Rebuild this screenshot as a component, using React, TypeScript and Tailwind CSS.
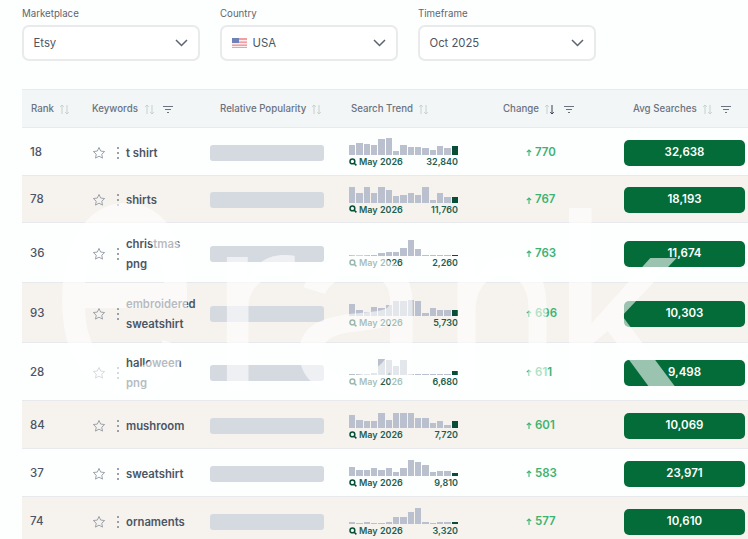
type Row = {
  rank: number
  keyword: string
  bars: number[]
  total: string
  change: number
  avg: string
  height: string
}

const rows: Row[] = [
  { rank: 18, keyword: "t shirt", bars: [10, 12, 11, 10, 16, 17, 4, 10, 8, 8, 7, 5, 9, 7, 9], total: "32,840", change: 770, avg: "32,638", height: "h-[48px]" },
  { rank: 78, keyword: "shirts", bars: [16, 10, 16, 10, 16, 13, 7, 8, 10, 8, 16, 3, 10, 6, 6], total: "11,760", change: 767, avg: "18,193", height: "h-[47px]" },
  { rank: 36, keyword: "christmas png", bars: [1, 1, 1, 1, 3, 4, 4, 8, 16, 7, 1, 1, 1, 1, 1], total: "2,260", change: 763, avg: "11,674", height: "h-[60px]" },
  { rank: 93, keyword: "embroidered sweatshirt", bars: [12, 6, 4, 9, 8, 11, 15, 15, 16, 15, 3, 8, 6, 6, 6], total: "5,730", change: 696, avg: "10,303", height: "h-[60px]" },
  { rank: 28, keyword: "halloween png", bars: [1, 1, 1, 2, 16, 15, 9, 15, 1, 1, 1, 1, 1, 1, 4], total: "6,680", change: 611, avg: "9,498", height: "h-[58px]" },
  { rank: 84, keyword: "mushroom", bars: [13, 8, 7, 7, 15, 8, 15, 15, 15, 10, 10, 5, 7, 3, 7], total: "7,720", change: 601, avg: "10,069", height: "h-[48px]" },
  { rank: 37, keyword: "sweatshirt", bars: [9, 6, 6, 8, 6, 8, 4, 8, 16, 14, 11, 4, 5, 5, 3], total: "9,810", change: 583, avg: "23,971", height: "h-[48px]" },
  { rank: 74, keyword: "ornaments", bars: [2, 1, 2, 1, 1, 2, 7, 7, 12, 16, 2, 1, 2, 2, 2], total: "3,320", change: 577, avg: "10,610", height: "h-[48px]" },
]

function Chevron() {
  return (
    <svg width="13" height="8" viewBox="0 0 13 8" fill="none" stroke="#5b6470" strokeWidth="1.5">
      <path d="M1 1l5.5 5.5L12 1" />
    </svg>
  )
}

function Flag() {
  return (
    <svg width="15" height="10" viewBox="0 0 15 10">
      <rect width="15" height="10" fill="#f0a0a4" />
      <rect y="2" width="15" height="1.4" fill="#fbeeee" />
      <rect y="5" width="15" height="1.4" fill="#fbeeee" />
      <rect y="8" width="15" height="1" fill="#fbeeee" />
      <rect width="7" height="5" fill="#6f82b8" />
    </svg>
  )
}

function Select({ label, value, flag }: { label: string; value: string; flag?: boolean }) {
  return (
    <div className="w-[178px]">
      <div className="text-[9.7px] leading-[12px] text-[#5f6670]">{label}</div>
      <div className="mt-[5px] h-[36px] flex items-center justify-between pl-[9.5px] pr-[10px] bg-white border-2 border-[#e8eaec] rounded-[7px]">
        <div className="flex items-center gap-[6px] text-[11.3px] text-[#4b5563]">
          {flag && <Flag />}
          {value}
        </div>
        <Chevron />
      </div>
    </div>
  )
}

function SortIcon({ active }: { active?: boolean }) {
  return (
    <svg width="11" height="11" viewBox="0 0 11 11" fill="none" strokeWidth="1">
      <path d="M3 10V1M1.2 2.8L3 1l1.8 1.8" stroke="#c5d2cc" />
      <path d="M8 1v9M6.2 8.2L8 10l1.8-1.8" stroke={active ? "#374151" : "#c5d2cc"} />
    </svg>
  )
}

function FilterIcon() {
  return (
    <svg width="10" height="7" viewBox="0 0 10 7" fill="none" stroke="#6b7280" strokeWidth="1">
      <path d="M0 .5h10M2 3.5h6M4 6.5h2" />
    </svg>
  )
}

function Star() {
  return (
    <svg width="14" height="14" viewBox="0 0 24 24" fill="none" stroke="#9aa1ab" strokeWidth="1.7" strokeLinejoin="round">
      <path d="M12 2.5l2.9 6.2 6.8.8-5 4.6 1.3 6.7-6-3.4-6 3.4 1.3-6.7-5-4.6 6.8-.8z" />
    </svg>
  )
}

function Dots() {
  return (
    <div className="flex flex-col gap-[3px]">
      <span className="w-[2px] h-[2px] rounded-full bg-[#7b828c]" />
      <span className="w-[2px] h-[2px] rounded-full bg-[#7b828c]" />
      <span className="w-[2px] h-[2px] rounded-full bg-[#7b828c]" />
    </div>
  )
}

function Trend({ bars, total }: { bars: number[]; total: string }) {
  return (
    <div className="w-[109px]">
      <div className="h-[17px] flex items-end gap-[1px]">
        {bars.map((b, i) => (
          <div
            key={i}
            className={i === bars.length - 1 ? "flex-1 bg-[#064e36]" : "flex-1 bg-[#bac0cd]"}
            style={{ height: b }}
          />
        ))}
      </div>
      <div className="mt-[1px] flex items-center justify-between text-[9px] leading-[11px] font-semibold text-[#1f5f50]">
        <div className="flex items-center gap-[2px]">
          <svg width="8" height="8" viewBox="0 0 8 8" fill="none" stroke="#064e36" strokeWidth="1.5">
            <circle cx="3.4" cy="3.4" r="2.4" />
            <path d="M5.2 5.2L7.4 7.4" />
          </svg>
          May 2026
        </div>
        <span>{total}</span>
      </div>
    </div>
  )
}

function TableRow({ row, odd }: { row: Row; odd: boolean }) {
  return (
    <div className={`${row.height} pt-[2px] flex items-center border-b border-[#e8e9ec] ${odd ? "bg-[#f6f3ee]" : "bg-[#fdfefe]"}`}>
      <div className="w-[70px] pl-[8px] text-[11.5px] font-medium text-[#4b5563]">{row.rank}</div>
      <div className="w-[118px] flex items-center">
        <Star />
        <div className="ml-[11px] mr-[7px]">
          <Dots />
        </div>
        <div className="w-[73px] text-[11.3px] leading-[20px] font-semibold text-[#4b5563]">{row.keyword}</div>
      </div>
      <div className="w-[139px]">
        <div className="w-[114px] h-[16px] rounded-[3px] bg-[#d5d9e0]" />
      </div>
      <Trend bars={row.bars} total={row.total} />
      <div className="w-[166px] pl-[68px] flex items-center gap-[3px] text-[11.5px] font-semibold text-[#3cb371]">
        <svg width="6" height="7" viewBox="0 0 6 7" fill="none" stroke="#3cb371" strokeWidth="1.1">
          <path d="M3 7V1M.8 3.2L3 1l2.2 2.2" />
        </svg>
        {row.change}
      </div>
      <div className="w-[121px] h-[26px] rounded-[5px] bg-[#046c38] flex items-center justify-center text-[11.5px] font-semibold text-white">
        {row.avg}
      </div>
    </div>
  )
}

function Header() {
  return (
    <div className="h-[39px] pt-[2px] flex items-center bg-[#f3f6f6] border-y border-[#e8eaec] text-[9.7px] font-medium text-[#6b7280]">
      <div className="w-[70px] pl-[9px] flex items-center gap-[5px]">
        Rank <SortIcon />
      </div>
      <div className="w-[128px] flex items-center gap-[6px]">
        Keywords <SortIcon />
        <span className="ml-[2px]">
          <FilterIcon />
        </span>
      </div>
      <div className="w-[131px] flex items-center gap-[5px]">
        Relative Popularity <SortIcon />
      </div>
      <div className="w-[152px] flex items-center gap-[5px]">
        Search Trend <SortIcon />
      </div>
      <div className="w-[130px] flex items-center gap-[5px]">
        Change <SortIcon active />
        <span className="ml-[4px]">
          <FilterIcon />
        </span>
      </div>
      <div className="flex items-center gap-[5px]">
        Avg Searches <SortIcon />
        <span className="ml-[3px]">
          <FilterIcon />
        </span>
      </div>
    </div>
  )
}

export default function App() {
  return (
    <div className="relative w-[748px] h-[539px] overflow-hidden bg-[#fdfefe] font-['Inter',sans-serif]">
      <div className="pl-[22px] pt-[8px] flex gap-[20px]">
        <Select label="Marketplace" value="Etsy" />
        <Select label="Country" value="USA" flag />
        <Select label="Timeframe" value="Oct 2025" />
      </div>
      <div className="ml-[22px] mt-[28px]">
        <Header />
        {rows.map((row, i) => (
          <TableRow key={row.rank} row={row} odd={i % 2 === 1} />
        ))}
      </div>
      {/* watermark sits on top of the rows, each letter placed to match the logo */}
      <div className="absolute inset-0 pointer-events-none select-none text-white/60 leading-none font-normal">
        <span className="absolute left-[49px] top-[98px] text-[340px] origin-left scale-x-[0.76]">e</span>
        <span className="absolute left-[208px] top-[180px] text-[245px]">r</span>
        <span className="absolute left-[288px] top-[180px] text-[245px] origin-left scale-x-[1.05]">a</span>
        <span className="absolute left-[442px] top-[180px] text-[245px] origin-left scale-x-[0.83]">n</span>
        <span className="absolute left-[552px] top-[177px] text-[254px] font-['Liberation_Sans',sans-serif]">k</span>
      </div>
    </div>
  )
}
